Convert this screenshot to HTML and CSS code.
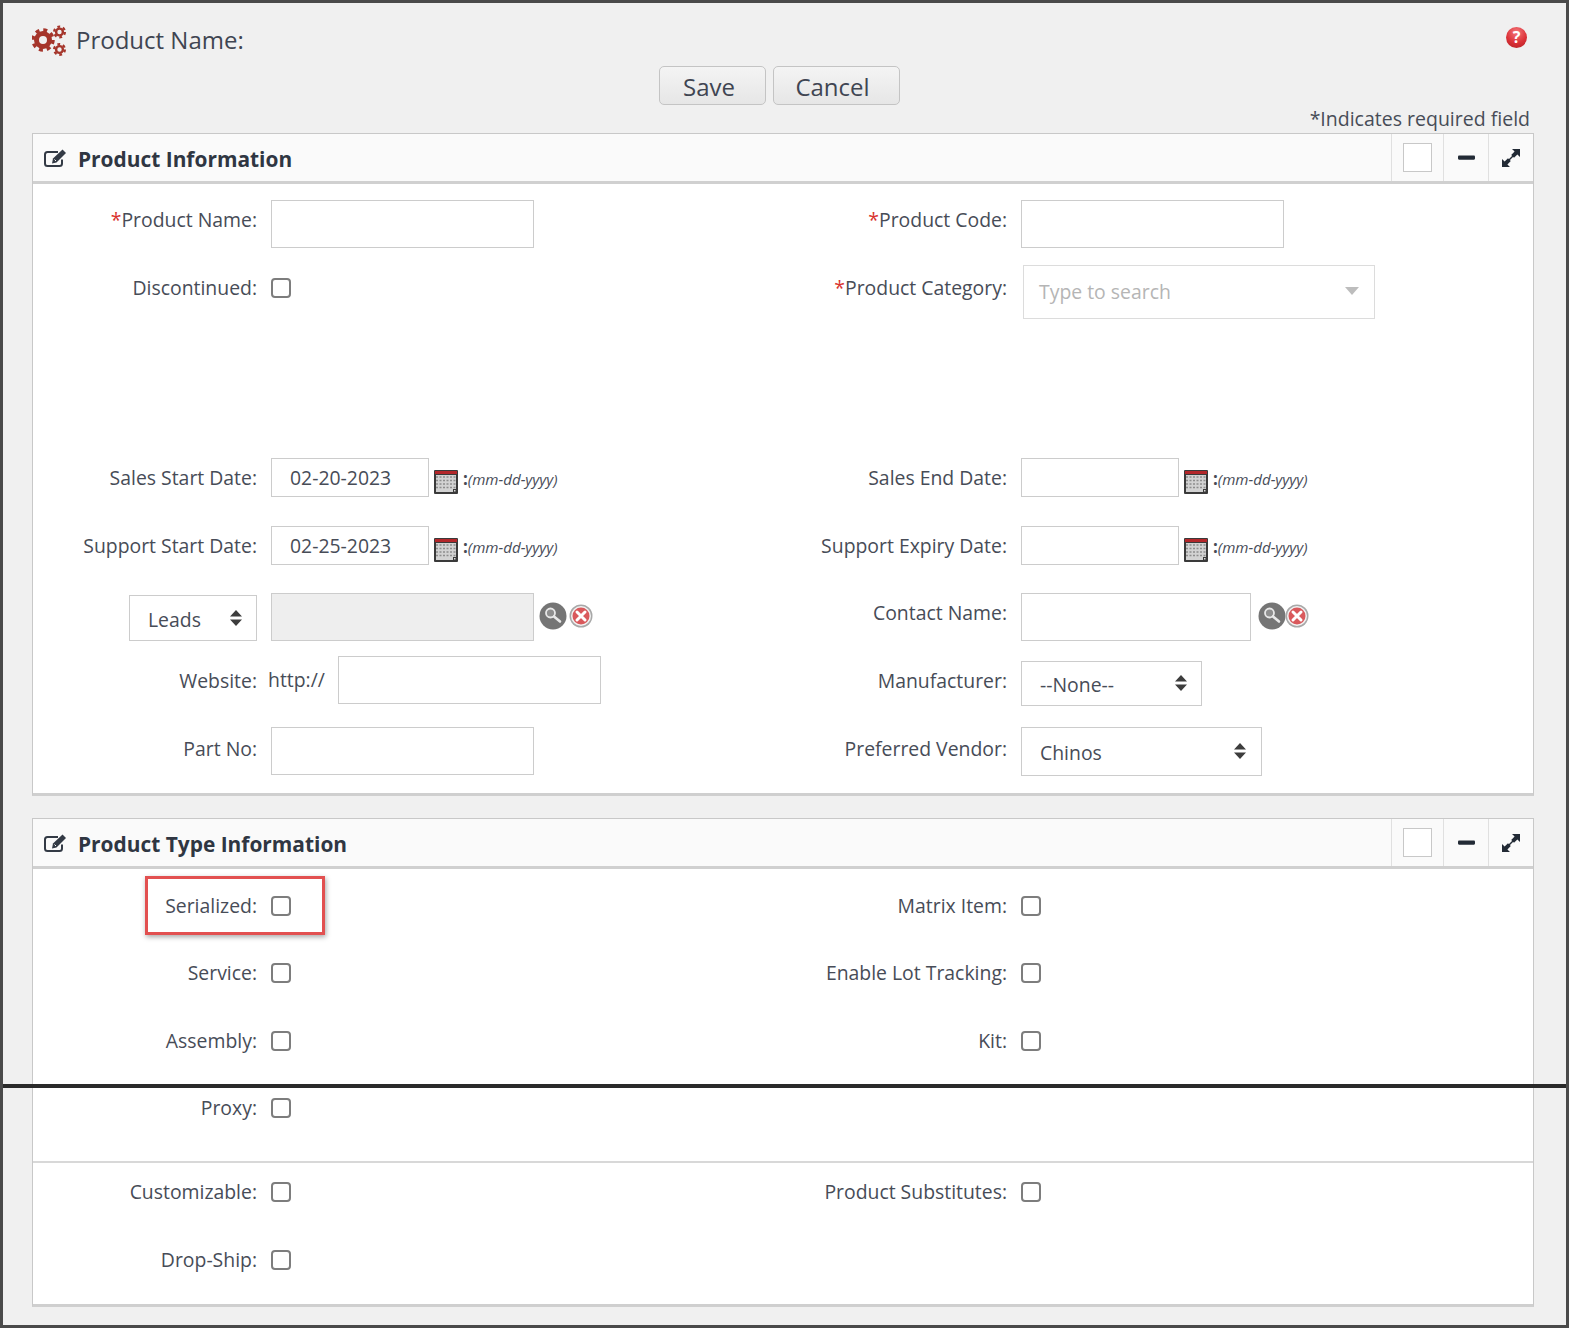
FILE: index.html
```html
<!DOCTYPE html>
<html lang="en">
<head>
<meta charset="utf-8">
<title>Product Name</title>
<link rel="stylesheet" href="styles.css">
</head>
<body>
<svg class="defs" aria-hidden="true">
  <symbol id="i-edit" viewBox="0 0 24 20">
    <path d="M19 11.500v4a2.500 2.500 0 0 1-2.500 2.500H4.500A2.500 2.500 0 0 1 2 15.500V6.500A2.500 2.500 0 0 1 4.500 4H15" fill="none" stroke="#333a45" stroke-width="2"/>
    <path d="M10 10.500L19.500 1.500l3.500 3.500-9.500 9.500-4.500 1z" fill="#333a45"/>
    <path d="M11.500 11.500l1.500 1.500" stroke="#fafafa" stroke-width="1"/>
  </symbol>
  <symbol id="i-cal" viewBox="0 0 24 24">
    <rect x="0" y="0" width="24" height="24" rx="1" fill="#3a3a3a"/>
    <rect x="1" y="1" width="22" height="3" fill="#b3272a"/>
    <rect x="2" y="5" width="20" height="17" fill="#d2d2d2"/>
    <path d="M2 7h20M2 10.500h20M2 14h20M2 17.500h20" stroke="#8d8d8d" stroke-width="1.600" stroke-dasharray="2 1.500"/>
    <rect x="19" y="19" width="4" height="4" fill="#3a3a3a"/>
    <rect x="20" y="20" width="1.500" height="1.500" fill="#ddd"/>
  </symbol>
  <symbol id="i-search" viewBox="0 0 28 28">
    <circle cx="14" cy="14" r="13.500" fill="#757575"/>
    <circle cx="11.500" cy="11" r="4.500" fill="#8f8f8f" stroke="#e8e8e8" stroke-width="1.800"/>
    <path d="M15 14.500l6 5" stroke="#e8e8e8" stroke-width="2.600" stroke-linecap="round"/>
  </symbol>
  <symbol id="i-clear" viewBox="0 0 24 24">
    <circle cx="12" cy="12" r="11.500" fill="#a8a8a8"/>
    <circle cx="12" cy="12" r="10" fill="#f2f2f2"/>
    <circle cx="12" cy="12" r="8.500" fill="#d9595c"/>
    <path d="M8 8l8 8M16 8l-8 8" stroke="#fff" stroke-width="3" stroke-linecap="round"/>
  </symbol>
  <symbol id="i-updown" viewBox="0 0 14 18">
    <path d="M7 1l6 6.500H1zM7 17l6-6.500H1z" fill="#3d3d3d"/>
  </symbol>
  <symbol id="i-min" viewBox="0 0 16 4">
    <rect width="16" height="4" rx="1" fill="#222a35"/>
  </symbol>
  <symbol id="i-expand" viewBox="0 0 20 20">
    <path d="M11 1h8v8l-2.600-2.600L13 9.800 10.200 7l3.400-3.400zM9 19H1v-8l2.600 2.600L7 10.200 9.800 13l-3.400 3.400z" fill="#222a35"/>
    <path d="M8 12l4-4" stroke="#222a35" stroke-width="1.400"/>
  </symbol>
</svg>

<div class="frame">
  <div class="scanline"></div>

  <div class="title-row">
    <svg class="gears" viewBox="0 0 34 32" aria-hidden="true">
      <g fill="none" stroke="#a5352b">
        <circle cx="11" cy="15" r="6.500" stroke-width="5"/>
        <circle cx="11" cy="15" r="10" stroke-width="3.500" stroke-dasharray="3.930 3.920"/>
        <circle cx="27.500" cy="7" r="3.400" stroke-width="2.400"/>
        <circle cx="27.500" cy="7" r="5.400" stroke-width="2.200" stroke-dasharray="2.830 2.830"/>
        <circle cx="27.500" cy="24.500" r="3.400" stroke-width="2.400"/>
        <circle cx="27.500" cy="24.500" r="5.400" stroke-width="2.200" stroke-dasharray="2.830 2.830"/>
      </g>
    </svg>
    <h1 class="page-title">Product Name:</h1>
    <span class="help">?</span>
  </div>

  <div class="actions">
    <button class="btn btn-save" type="button">Save</button>
    <button class="btn btn-cancel" type="button">Cancel</button>
  </div>

  <div class="required-note">*Indicates required field</div>

  <section class="panel">
    <header class="panel-head">
      <svg class="edit-icon"><use href="#i-edit"/></svg>
      <h2 class="panel-title">Product Information</h2>
      <div class="tool tool-box"><span class="white-box"></span></div>
      <div class="tool tool-min"><svg class="min-icon"><use href="#i-min"/></svg></div>
      <div class="tool tool-exp"><svg class="exp-icon"><use href="#i-expand"/></svg></div>
    </header>
    <div class="panel-body body-info">
      <div class="row h65">
        <label class="lbl"><span class="req">*</span>Product Name:</label>
        <div class="fld"><input class="inp w263 tall" type="text"></div>
        <label class="lbl lbl2"><span class="req">*</span>Product Code:</label>
        <div class="fld"><input class="inp w263 tall" type="text"></div>
      </div>
      <div class="row h193">
        <label class="lbl pt9">Discontinued:</label>
        <div class="fld"><input class="chk mt13" type="checkbox"></div>
        <label class="lbl lbl2 pt9"><span class="req">*</span>Product Category:</label>
        <div class="fld">
          <div class="combo"><span class="combo-text">Type to search</span><span class="combo-arrow"></span></div>
        </div>
      </div>
      <div class="row h68">
        <label class="lbl">Sales Start Date:</label>
        <div class="fld date-fld">
          <input class="inp date" type="text" value="02-20-2023">
          <svg class="cal"><use href="#i-cal"/></svg>
          <span class="hint"><b>:</b>(mm-dd-yyyy)</span>
        </div>
        <label class="lbl lbl2">Sales End Date:</label>
        <div class="fld date-fld">
          <input class="inp date" type="text">
          <svg class="cal"><use href="#i-cal"/></svg>
          <span class="hint"><b>:</b>(mm-dd-yyyy)</span>
        </div>
      </div>
      <div class="row h67">
        <label class="lbl">Support Start Date:</label>
        <div class="fld date-fld">
          <input class="inp date" type="text" value="02-25-2023">
          <svg class="cal"><use href="#i-cal"/></svg>
          <span class="hint"><b>:</b>(mm-dd-yyyy)</span>
        </div>
        <label class="lbl lbl2">Support Expiry Date:</label>
        <div class="fld date-fld">
          <input class="inp date" type="text">
          <svg class="cal"><use href="#i-cal"/></svg>
          <span class="hint"><b>:</b>(mm-dd-yyyy)</span>
        </div>
      </div>
      <div class="row h63">
        <div class="lbl lbl-select">
          <div class="sel sel-leads"><span>Leads</span><svg class="updown"><use href="#i-updown"/></svg></div>
        </div>
        <div class="fld lookup">
          <input class="inp w263 tall ro" type="text" readonly>
          <svg class="ic-search"><use href="#i-search"/></svg>
          <svg class="ic-clear"><use href="#i-clear"/></svg>
        </div>
        <label class="lbl lbl2">Contact Name:</label>
        <div class="fld lookup">
          <input class="inp w230 tall" type="text">
          <svg class="ic-search ic-search-r"><use href="#i-search"/></svg>
          <svg class="ic-clear ic-clear-r"><use href="#i-clear"/></svg>
        </div>
      </div>
      <div class="row h71">
        <label class="lbl pt10">Website:</label>
        <div class="fld web-fld">
          <span class="http">http://</span>
          <input class="inp w263 tall" type="text">
        </div>
        <label class="lbl lbl2 pt10">Manufacturer:</label>
        <div class="fld">
          <div class="sel sel-none"><span>--None--</span><svg class="updown"><use href="#i-updown"/></svg></div>
        </div>
      </div>
      <div class="row h48">
        <label class="lbl pt7">Part No:</label>
        <div class="fld"><input class="inp w263 tall" type="text"></div>
        <label class="lbl lbl2 pt7">Preferred Vendor:</label>
        <div class="fld">
          <div class="sel sel-chinos"><span>Chinos</span><svg class="updown"><use href="#i-updown"/></svg></div>
        </div>
      </div>
    </div>
  </section>

  <section class="panel panel-type">
    <header class="panel-head">
      <svg class="edit-icon"><use href="#i-edit"/></svg>
      <h2 class="panel-title">Product Type Information</h2>
      <div class="tool tool-box"><span class="white-box"></span></div>
      <div class="tool tool-min"><svg class="min-icon"><use href="#i-min"/></svg></div>
      <div class="tool tool-exp"><svg class="exp-icon"><use href="#i-expand"/></svg></div>
    </header>
    <div class="panel-body body-type">
      <div class="row h67 row-flag">
        <div class="highlight"></div>
        <label class="lbl">Serialized:</label>
        <div class="fld"><input class="chk mt10" type="checkbox"></div>
        <label class="lbl lbl2">Matrix Item:</label>
        <div class="fld"><input class="chk mt10" type="checkbox"></div>
      </div>
      <div class="row h68">
        <label class="lbl">Service:</label>
        <div class="fld"><input class="chk mt10" type="checkbox"></div>
        <label class="lbl lbl2">Enable Lot Tracking:</label>
        <div class="fld"><input class="chk mt10" type="checkbox"></div>
      </div>
      <div class="row h67">
        <label class="lbl">Assembly:</label>
        <div class="fld"><input class="chk mt10" type="checkbox"></div>
        <label class="lbl lbl2">Kit:</label>
        <div class="fld"><input class="chk mt10" type="checkbox"></div>
      </div>
      <div class="row h73">
        <label class="lbl">Proxy:</label>
        <div class="fld"><input class="chk mt10" type="checkbox"></div>
      </div>
      <div class="divider"></div>
      <div class="row h68">
        <label class="lbl">Customizable:</label>
        <div class="fld"><input class="chk mt10" type="checkbox"></div>
        <label class="lbl lbl2">Product Substitutes:</label>
        <div class="fld"><input class="chk mt10" type="checkbox"></div>
      </div>
      <div class="row h64">
        <label class="lbl">Drop-Ship:</label>
        <div class="fld"><input class="chk mt10" type="checkbox"></div>
      </div>
    </div>
  </section>
</div>
</body>
</html>
```

FILE: styles.css
```css
* { box-sizing: border-box; }
html, body { margin: 0; padding: 0; }
body {
  width: 1569px;
  height: 1328px;
  overflow: hidden;
  font-family: "Open Sans", "Liberation Sans", sans-serif;
  color: #474c57;
  background: #f0f0f0;
}
.defs { position: absolute; width: 0; height: 0; }

.frame {
  position: relative;
  width: 1569px;
  height: 1328px;
  border: 3px solid #4a4a4a;
  background: #f0f0f0;
}
.scanline {
  position: absolute;
  left: 0;
  right: 0;
  top: 1081px;
  height: 4px;
  background: #2a2a2a;
  z-index: 5;
}

/* Top area */
.title-row {
  height: 63px;
  padding: 22px 39px 0 29px;
  display: flex;
  align-items: flex-start;
}
.gears { width: 34px; height: 32px; flex: none; }
.page-title {
  margin: 0 0 0 10px;
  font-size: 24px;
  font-weight: 400;
  line-height: 30px;
  color: #3f4552;
  flex: 1;
}
.help {
  width: 21px;
  height: 21px;
  margin-top: 2px;
  border-radius: 50%;
  background: radial-gradient(circle at 50% 25%, #f4787c 0%, #dc3238 55%, #b01e24 100%);
  color: #fff;
  font-size: 16px;
  font-weight: 700;
  line-height: 21px;
  text-align: center;
}
.actions {
  height: 39px;
  display: flex;
  justify-content: center;
  gap: 7px;
  padding-right: 11px;
}
.btn {
  height: 39px;
  padding: 2px 6px 0 0;
  border: 1px solid #c4c4c4;
  border-radius: 5px;
  background: linear-gradient(#f4f4f4, #e6e6e6);
  font-family: inherit;
  font-size: 24px;
  line-height: 36px;
  color: #3f4552;
}
.btn-save { width: 107px; }
.btn-cancel { width: 127px; padding-right: 7px; }
.required-note {
  height: 28px;
  padding-right: 36px;
  text-align: right;
  font-size: 19.500px;
  line-height: 28px;
  color: #474c57;
}

/* Panels */
.panel {
  width: 1502px;
  margin-left: 29px;
  background: #fff;
  border: 1px solid #c8c8c8;
  border-bottom: 3px solid #cfcfcf;
}
.panel-type { margin-top: 22px; }
.panel-head {
  height: 50px;
  display: flex;
  align-items: stretch;
  background: #fafafa;
  border-bottom: 3px solid #d0d0d0;
}
.edit-icon { width: 24px; height: 20px; margin: 14px 0 0 10px; flex: none; }
.panel-title {
  flex: 1;
  margin: 0 0 0 11px;
  font-size: 20.900px;
  font-weight: 700;
  line-height: 51px;
  color: #2f3642;
}
.tool {
  border-left: 1px solid #e0e0e0;
  display: flex;
  justify-content: center;
  align-items: flex-start;
}
.tool-box { width: 52px; padding-top: 9px; }
.tool-min { width: 45px; padding-top: 21px; }
.tool-exp { width: 45px; padding-top: 14px; }
.white-box { width: 29px; height: 29px; background: #fff; border: 1px solid #c8c8c8; }
.min-icon { width: 17px; height: 5px; }
.exp-icon { width: 20px; height: 20px; }

.body-info { padding: 16px 0 18px; }
.body-type { padding-top: 17px; }

.row {
  position: relative;
  display: grid;
  grid-template-columns: 238px 512px 238px 1fr;
  align-items: start;
}
.h48 { height: 48px; }
.h63 { height: 63px; }
.h64 { height: 64px; }
.h65 { height: 65px; }
.h67 { height: 67px; }
.h68 { height: 68px; }
.h71 { height: 71px; }
.h73 { height: 73px; }
.h193 { height: 193px; }

.lbl {
  display: block;
  padding: 6px 14px 0 0;
  text-align: right;
  font-size: 19.400px;
  line-height: 28px;
  color: #474c57;
}
.lbl2 { padding-right: 14px; }
.pt7 { padding-top: 8px; }
.pt9 { padding-top: 9px; }
.pt10 { padding-top: 11px; }
.req { color: #d9322e; }
.lbl-select { padding-top: 2px; display: flex; justify-content: flex-end; }

.fld { display: flex; align-items: flex-start; }

.inp {
  display: block;
  height: 39px;
  padding: 0 0 0 18px;
  border: 1px solid #cccccc;
  background: #fff;
  font-family: inherit;
  font-size: 19.400px;
  color: #474c57;
  border-radius: 0;
  outline: none;
}
.tall { height: 48px; }
.w263 { width: 263px; }
.w230 { width: 230px; }
.date { width: 158px; }
.ro { background: #eeeeee; }

.chk {
  appearance: none;
  -webkit-appearance: none;
  display: block;
  width: 20px;
  height: 20px;
  margin: 0;
  border: 2px solid #7d7d7d;
  border-radius: 4px;
  background: #fff;
}
.mt10 { margin-top: 10px; }
.mt13 { margin-top: 13px; }

.date-fld { align-items: flex-start; }
.cal { width: 24px; height: 24px; margin: 12px 0 0 5px; flex: none; }
.hint {
  margin: 10px 0 0 5px;
  font-size: 15.100px;
  line-height: 22px;
  font-style: italic;
  color: #474c57;
  white-space: nowrap;
}
.hint b { font-style: normal; font-weight: 700; font-size: 17px; }

.lookup { align-items: flex-start; }
.ic-search { width: 28px; height: 28px; margin: 9px 0 0 5px; flex: none; }
.ic-clear { width: 24px; height: 24px; margin: 11px 0 0 2px; flex: none; }
.ic-search-r { margin-left: 7px; }
.ic-clear-r { margin-left: -1px; }

.http { margin: 10px 13px 0 -3px; font-size: 19.400px; line-height: 28px; }
.web-fld { align-items: flex-start; }

.sel {
  display: flex;
  align-items: center;
  justify-content: space-between;
  padding: 2px 13px 0 18px;
  border: 1px solid #cccccc;
  background: #fff;
  font-size: 19.400px;
  color: #474c57;
}
.updown { width: 14px; height: 18px; flex: none; margin-top: -3px; }
.sel-leads { width: 128px; height: 46px; padding-top: 3px; }
.sel-none { width: 181px; height: 45px; margin-top: 5px; }
.sel-chinos { width: 241px; height: 49px; padding-right: 14px; }

.combo {
  width: 352px;
  height: 54px;
  margin-left: 2px;
  padding: 0 15px 2px;
  display: flex;
  align-items: center;
  justify-content: space-between;
  border: 1px solid #dcdcdc;
  background: #fff;
}
.combo-text { font-size: 19.400px; color: #b5b5b5; }
.combo-arrow {
  width: 0;
  height: 0;
  border-left: 7px solid transparent;
  border-right: 7px solid transparent;
  border-top: 8px solid #bdbdbd;
}

.divider { height: 2px; background: #d8d8d8; margin-bottom: 9px; }

.highlight {
  position: absolute;
  left: 112px;
  top: -10px;
  width: 180px;
  height: 59px;
  border: 3px solid #e25050;
  box-shadow: 1px 2px 5px rgba(0, 0, 0, 0.35);
  pointer-events: none;
}
```
